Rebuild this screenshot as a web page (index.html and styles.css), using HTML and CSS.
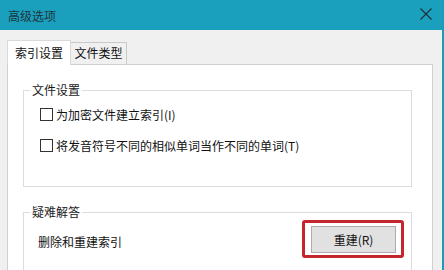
FILE: index.html
```html
<!DOCTYPE html>
<html>
  <head>
    <meta charset="utf-8">
    <link rel="stylesheet" href="styles.css">
  </head>
  <body>
    <div class="window">
      <div class="titlebar">
        <span class="title">高级选项</span>
        <svg class="close" width="12" height="12" viewBox="0 0 12 12">
          <path d="M0.5 0.5 L11.5 11.5 M11.5 0.5 L0.5 11.5" stroke="#1c2e36" stroke-width="1.1" fill="none"/>
        </svg>
      </div>

      <div class="content">
        <div class="tabs">
          <div class="tab active">索引设置</div>
          <div class="tab">文件类型</div>
        </div>

        <div class="panel">
          <fieldset class="group">
            <legend>文件设置</legend>
            <label class="check first">
              <span class="box"></span>
              <span>为加密文件建立索引(I)</span>
            </label>
            <label class="check">
              <span class="box"></span>
              <span>将发音符号不同的相似单词当作不同的单词(T)</span>
            </label>
          </fieldset>

          <fieldset class="group trouble">
            <legend>疑难解答</legend>
            <div class="row">
              <span class="row-text">删除和重建索引</span>
              <div class="highlight">
                <button class="btn">重建(R)</button>
              </div>
            </div>
          </fieldset>
        </div>
      </div>
    </div>
  </body>
</html>
```

FILE: styles.css
```css
html,
body {
  margin: 0;
  padding: 0;
}

body {
  width: 444px;
  height: 270px;
  overflow: hidden;
  background-color: #f0f0f0;
  font-family: "Noto Sans CJK SC", "Liberation Sans", sans-serif;
  font-size: 12px;
  color: #111;
}

.window {
  height: 270px;
  box-sizing: border-box;
  border-right: 2px solid #1a9dba;
  overflow: hidden;
}

.titlebar {
  height: 30px;
  background-color: #1aa0bd;
  display: flex;
  align-items: center;
  justify-content: space-between;
  padding: 0 10px 0 8px;
}

.title {
  color: #1d3640;
  font-size: 12px;
  line-height: 16px;
  margin-top: 1px;
}

.close {
  margin-top: -2px;
}

.content {
  padding: 10px 9px 0 7px;
}

.tabs {
  display: flex;
  align-items: flex-end;
  height: 24px;
  position: relative;
  z-index: 1;
}

.tab {
  box-sizing: border-box;
  height: 22px;
  width: 57px;
  border: 1px solid #c9c9c9;
  border-bottom: none;
  background-color: #f0f0f0;
  text-align: center;
  line-height: 20px;
  margin-left: -1px;
}

.tab.active {
  height: 25px;
  width: 64px;
  margin-left: 0;
  margin-bottom: -1px;
  background-color: #fff;
  border-color: #d9d9d9;
  line-height: 24px;
  z-index: 2;
}

.panel {
  box-sizing: border-box;
  height: 206px;
  overflow: hidden;
  background-color: #fff;
  border: 1px solid #d0d0d0;
  border-bottom: none;
  padding: 17px 20px 0 15px;
}

.group {
  margin: 0;
  padding: 0 0 31px 0;
  border: 1px solid #dcdcdc;
}

.group legend {
  margin-left: 6px;
  padding: 0 2px;
  line-height: 16px;
  color: #1a1a1a;
}

.check {
  display: flex;
  align-items: center;
  height: 20px;
  margin-top: 11px;
  margin-left: 16px;
}

.check.first {
  margin-top: 6px;
}

.box {
  box-sizing: border-box;
  width: 13px;
  height: 13px;
  border: 1px solid #333;
  background-color: #fff;
  margin-right: 3px;
}

.trouble {
  margin-top: 17px;
  padding-bottom: 20px;
}

.row {
  display: flex;
  align-items: center;
  justify-content: space-between;
}

.row-text {
  margin-left: 14px;
  margin-top: 4px;
}

.highlight {
  border: 3px solid #c3262c;
  border-radius: 3px;
  padding: 3px 5px 2px 6px;
  margin-right: 7px;
}

.btn {
  display: block;
  box-sizing: border-box;
  width: 85px;
  height: 27px;
  border: 1px solid #adadad;
  background-color: #e1e1e1;
  font-family: inherit;
  font-size: 12px;
  color: #111;
  padding: 0;
}
```
